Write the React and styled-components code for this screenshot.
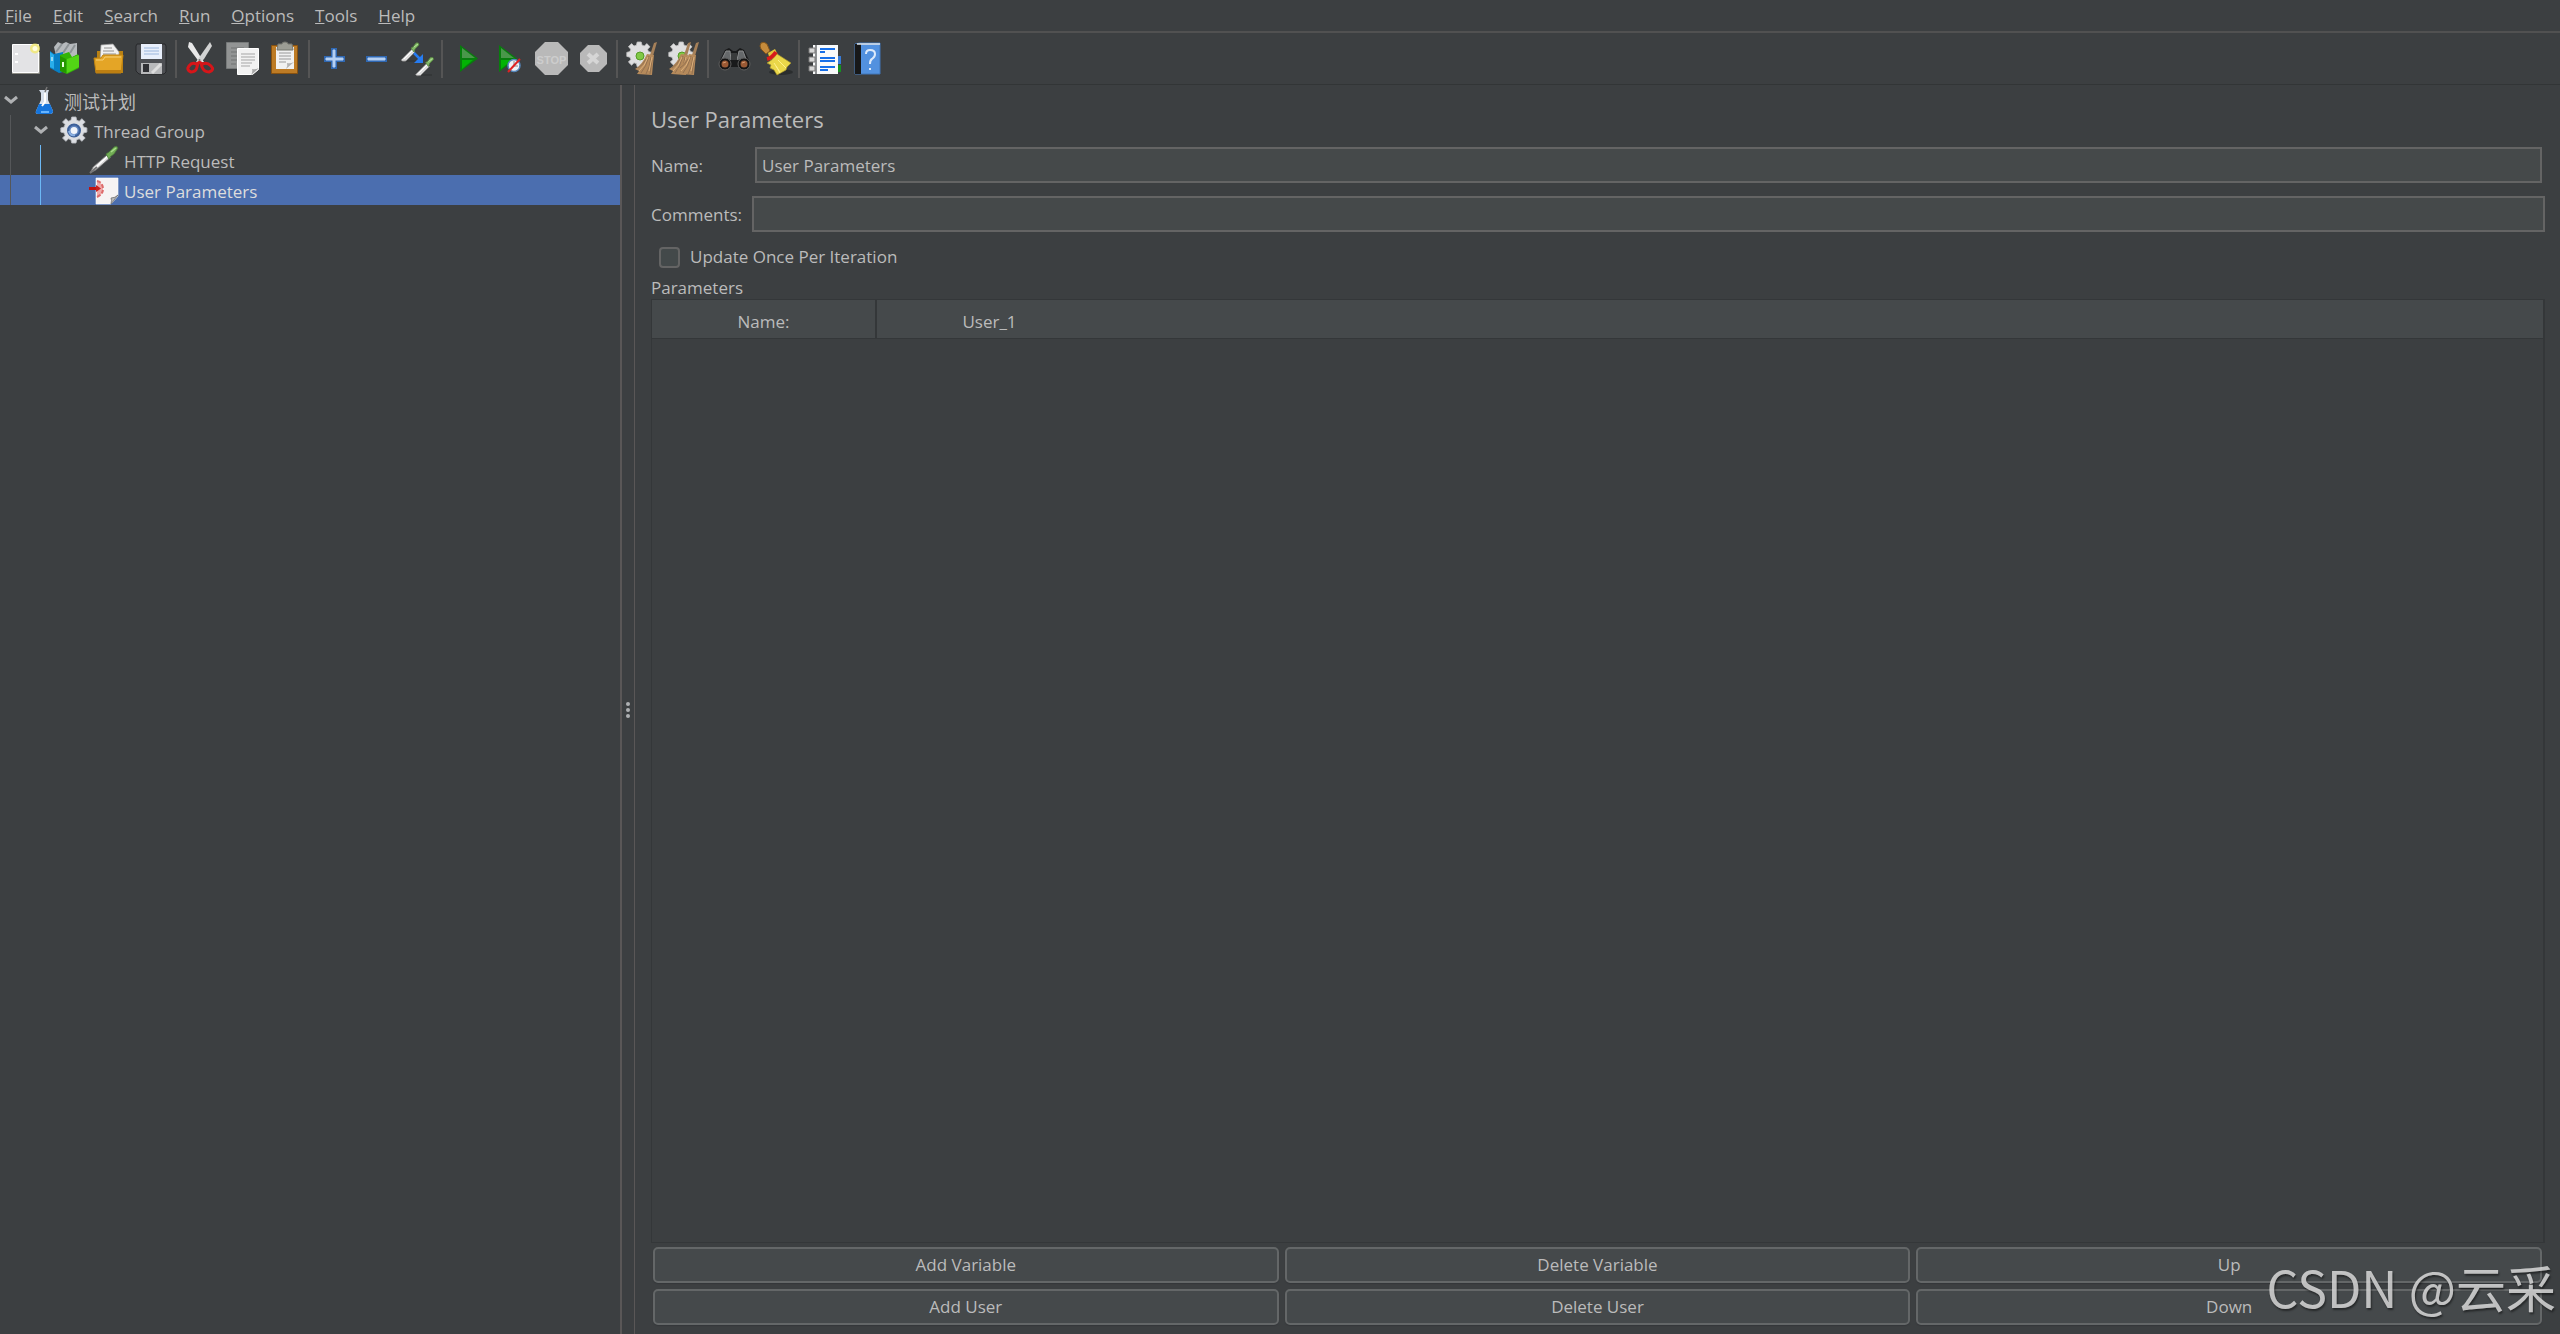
import React, { useState } from "react";
import styled, { createGlobalStyle } from "styled-components";

const GlobalStyle = createGlobalStyle`
  * { box-sizing: border-box; }
  body {
    margin: 0;
    background: #3c3f41;
    color: #bbbbbb;
    font-family: "Open Sans", "Noto Sans CJK SC", sans-serif;
    font-size: 17px;
    line-height: 24px;
  }
  button, input { font: inherit; color: inherit; }
`;

const Window = styled.div`
  display: flex;
  flex-direction: column;
  height: 100vh;
  overflow: hidden;
`;

const MenuBar = styled.nav`
  display: flex;
  gap: 21px;
  height: 33px;
  padding: 4px 5px;
  border-bottom: 2px solid #515151;
`;

const MenuItem = styled.button`
  padding: 0;
  border: 0;
  background: none;
  line-height: 24px;
  &::first-letter { text-decoration: underline; }
`;

const Toolbar = styled.div`
  display: flex;
  align-items: center;
  height: 52px;
  padding: 0 5px;
  border-bottom: 1px solid #323536;
`;

const ToolButton = styled.button`
  display: flex;
  justify-content: center;
  width: 42px;
  padding: 0;
  border: 0;
  background: none;
`;

const Separator = styled.span`
  width: 7px;
  height: 38px;
  padding: 0 3px 0 2px;
  background: #555555 content-box;
`;

const Icon = styled.svg`
  display: block;
  flex: none;
  width: ${({ $size }) => $size || 34}px;
  height: ${({ $size }) => $size || 34}px;
  overflow: visible;
`;

const Body = styled.div`
  display: flex;
  flex: 1;
  min-height: 0;
`;

const Tree = styled.ul`
  flex: 0 0 620px;
  margin: 0;
  padding: 0;
  list-style: none;
`;

const TreeRow = styled.li`
  display: flex;
  align-items: center;
  height: 30px;
  background: ${({ $selected }) => ($selected ? "#4b6eaf" : "none")};
  color: ${({ $selected }) => ($selected ? "#dddddd" : "inherit")};
`;

const Indent = styled.span`
  width: 30px;
  height: 30px;
  padding-left: 10px;
  &::before {
    content: "";
    display: block;
    width: 1px;
    height: 30px;
    background: ${({ $active }) => ($active ? "#6cb8f5" : "#555759")};
  }
`;

const Expander = styled.span`
  display: flex;
  width: 29px;
  padding-left: 4px;
`;

const TreeLabel = styled.span`
  padding: 3px 0 0 5px;
  &:lang(zh) { font-size: 18px; }
`;

const Splitter = styled.div`
  display: flex;
  flex-direction: column;
  justify-content: center;
  align-items: center;
  gap: 2px;
  flex: 0 0 15px;
  border-left: 2px solid #5a5757;
  border-right: 1px solid #5a5757;
`;

const Dot = styled.span`
  width: 4px;
  height: 4px;
  border-radius: 2px;
  background: #afb1b3;
`;

const Panel = styled.main`
  display: flex;
  flex-direction: column;
  flex: 1;
  min-width: 0;
  padding: 18px 15px 9px 16px;
`;

const Title = styled.h1`
  margin: 0 0 12px;
  font-size: 22px;
  line-height: 32px;
  font-weight: 400;
`;

const Field = styled.div`
  display: flex;
  align-items: center;
  gap: ${({ $gap }) => $gap}px;
  margin: 0 ${({ $inset }) => $inset}px 13px 0;
`;

const TextInput = styled.input`
  flex: 1;
  height: 36px;
  padding: 1px 5px 0;
  border: 2px solid #646464;
  border-radius: 0;
  background: #45494a;
  outline: none;
`;

const FieldLabel = styled.label`
  width: ${({ $width }) => $width}px;
  padding-top: 2px;
`;

const CheckRow = styled.label`
  display: flex;
  align-items: center;
  gap: 10px;
  padding-left: 8px;
  margin-bottom: 8px;
`;

const Checkbox = styled.input`
  appearance: none;
  width: 21px;
  height: 21px;
  margin: 0;
  border: 2px solid #646464;
  border-radius: 4px;
  background: #43494a;
  &:checked { background: #4b6eaf; }
`;

const Caption = styled.h2`
  margin: 0;
  font-size: 17px;
  line-height: 22px;
  font-weight: 400;
`;

const TableFrame = styled.div`
  flex: 1;
  border: solid #343739;
  border-width: 1px 2px 1px 1px;
`;

const Table = styled.table`
  width: 100%;
  border-collapse: separate;
  border-spacing: 0;
  table-layout: fixed;
  background: #45494b;
`;

const HeadCell = styled.th`
  width: ${({ $width }) => ($width ? `${$width}px` : "auto")};
  height: 39px;
  padding: 6px 0 0;
  border-bottom: 1px solid #343739;
  border-right: ${({ $divided }) => ($divided ? "2px solid #343739" : "0")};
  font-weight: 400;
`;

const Actions = styled.div`
  display: grid;
  grid-template-columns: repeat(3, 1fr);
  gap: 6px;
  padding: 4px 3px 0 2px;
`;

const ActionButton = styled.button`
  height: 36px;
  padding: 0;
  border: 2px solid #646768;
  border-radius: 5px;
  background: #45494b;
  box-shadow: 0 1px 1px #34373a;
`;

const Watermark = styled.div`
  position: fixed;
  right: 4px;
  bottom: 12px;
  color: rgba(225, 225, 225, 0.82);
  font-family: "Noto Sans CJK SC", sans-serif;
  font-size: 50px;
  line-height: 72px;
  text-shadow: 1px 2px 2px rgba(0, 0, 0, 0.45);
  pointer-events: none;
`;

const GEAR = "M14 0h5l1 4 3 1 3-3 4 4-3 3 1 3 4 1v5l-4 1-1 3 3 3-4 4-3-3-3 1-1 4h-5l-1-4-3-1-3 3-4-4 3-3-1-3-4-1v-5l4-1 1-3-3-3 4-4 3 3 3-1z";

const Dropper = () => (
  <g>
    <path d="M1 17l10-10 3 3-9 9q-4 1-5-1z" fill="#dedede" stroke="#777" strokeWidth="0.7" />
    <path d="M3 17l9-9" stroke="#fff" />
    <path d="M10 6l2-1 3-4q3-1 3 2l-4 4-1 3z" fill="#82b967" stroke="#56843f" strokeWidth="0.8" />
    <path d="M13 5l4-3" stroke="#b6e39d" />
  </g>
);

const Brush = () => (
  <g>
    <path d="M29 1l3-1-4 14-3-1z" fill="#a58059" />
    <path d="M22 12l7 1-1 9-1 11-15-1 2-3-4-2q7-4 12-15z" fill="#b58a5b" />
    <path d="M24 14q-3 11-8 17M26 15q-1 10-5 17M21 17q-3 6-8 9M27 18l-2 14" fill="none" stroke="#947150" />
    <path d="M23 15q-3 9-9 14M27 15l-3 14" fill="none" stroke="#ddb17c" />
  </g>
);

const Cog = () => (
  <g>
    <path d={GEAR} transform="translate(1) scale(.8)" fill="#dededf" stroke="#c4c4c4" />
    <circle cx="15" cy="14" r="4" fill="#80c946" stroke="#559b25" />
  </g>
);

const PlayShape = () => (
  <g>
    <path d="M10 3l18 13.5L10 30z" fill="#087d0d" />
    <path d="M12 6l13 10H12z" fill="#4a974a" />
    <path d="M12 18h11l-11 9z" fill="#02b403" />
  </g>
);

const icons = {
  new: (
    <g>
      <path d="M3.500 2.500h26v28h-26z" fill="#e3e3e5" stroke="#fff" />
      <path d="M3 31.500h27.500V10" fill="none" stroke="#8c8c85" />
      <path d="M6 12h3M6 20h3" stroke="#fff" strokeWidth="2" />
      <circle cx="26" cy="6.500" r="5" fill="#f2e96d" opacity=".8" />
      <circle cx="26" cy="6.500" r="2.500" fill="#fffde0" />
    </g>
  ),
  templates: (
    <g>
      <path d="M3 5l4-5 4 2 4-2 4 2 7-1v12l-8 4-13-3z" fill="#b6babd" />
      <path d="M5 10l6-8M12 11l6-9M19 11l5-8" stroke="#8d9396" strokeWidth="2" />
      <path d="M-1 9l4 3 9-2v20l-4 1-9-5z" fill="#087fc4" />
      <path d="M-1 10l4 3v14l-4-2z" fill="#29aeea" />
      <path d="M1 15v4" stroke="#fff" />
      <path d="M9 13l9-3 3 5 6-3 1 14-12 6-7-3z" fill="#32b507" />
      <path d="M16 17l12-4v12l-12 6z" fill="#52d515" />
      <path d="M9 14l6 3v14l-6-2z" fill="#249700" />
      <path d="M12 20v5" stroke="#e9ffe0" strokeWidth="2" />
    </g>
  ),
  open: (
    <g>
      <path d="M4 9h26v22H4z" fill="#b98113" />
      <path d="M8 3l12-1 6 8v8H7z" fill="#f1f1f1" stroke="#999" strokeWidth=".7" />
      <path d="M11 6h8M10 9h11M10 12h13" stroke="#909090" />
      <path d="M1 16h7l2-3h20l-2 18H3z" fill="#e4a526" stroke="#c18411" />
      <path d="M3 18h7l2-3h16" fill="none" stroke="#f8d278" />
      <path d="M3 28h25v3H3z" fill="#bd7f12" />
    </g>
  ),
  save: (
    <g>
      <path d="M2 2h28l1 2v26l-2 2H4l-3-3V4z" fill="#4d4f53" stroke="#27282b" />
      <path d="M6 2h21v15H6z" fill="#e8effb" />
      <path d="M9 6h15M9 9h15M9 12h15" stroke="#9bb6dc" />
      <path d="M6 21h21v11H6z" fill="#b8b9bb" />
      <path d="M8 22h6v8H8z" fill="#303135" />
      <path d="M17 31l9-9" stroke="#ddd" strokeWidth="3" />
    </g>
  ),
  cut: (
    <g>
      <path d="M5 0l3 1 8 13 4 6-4 1L4 5z" fill="#e8e8e8" />
      <path d="M26 0l2 4-8 13-5 5-3-2 7-10z" fill="#d2d3d3" />
      <path d="M14 21l-2 1q-4-2-7 2t2 6q5 0 6-5zM17 21l2 1q4-2 8 2t-2 6q-5 0-7-5z" fill="none" stroke="#d71519" strokeWidth="3" />
      <circle cx="15.500" cy="18" r="1" fill="#777" />
    </g>
  ),
  copy: (
    <g>
      <path d="M.5 .5h22v26H.5z" fill="#929494" stroke="#777a7a" />
      <path d="M5 6h13M5 10h8M5 14h6M5 18h6M5 22h5" stroke="#707373" />
      <path d="M11.500 6.500h21v21l-6 5h-15z" fill="#f2f2f2" stroke="#fff" />
      <path d="M15 12h14M15 15h14M15 18h14M15 21h11M15 24h9" stroke="#a5a5a5" />
      <path d="M25 33q2-3 1-6 3 1 7-1z" fill="#a7a7a7" />
    </g>
  ),
  paste: (
    <g>
      <path d="M3.500 3.500h26v28h-26z" fill="#bd7b25" stroke="#885210" />
      <path d="M8 5h18v22H8z" fill="#f1f1f1" />
      <path d="M10 2h4q0-2 3-2t3 2h4l1 6H9z" fill="#9c9d94" stroke="#75766f" />
      <path d="M11 11h12M11 14h12M11 17h12M11 20h7" stroke="#999" />
      <path d="M18 27q2-3 1-6 3 1 7-1z" fill="#b3b3b3" />
    </g>
  ),
  plus: (
    <g>
      <path d="M14 6h6v8h8v6h-8v7h-6v-7H7v-6h7z" fill="#2f67b1" />
      <path d="M16 8h2v8h8v2h-8v7h-2v-7H9v-2h7z" fill="#b5d0f3" stroke="#b5d0f3" />
    </g>
  ),
  minus: (
    <g>
      <path d="M7 14h21v6H7z" fill="#2f67b1" />
      <path d="M9 16h17v2H9z" fill="#b5d0f3" stroke="#b5d0f3" />
    </g>
  ),
  toggle: (
    <g>
      <path d="M2 19h13M17 33h14" stroke="#2d3031" />
      <Dropper />
      <g transform="translate(14.500 14.500)"><Dropper /></g>
      <path d="M13 11l7 7" stroke="#267cf1" strokeWidth="2.500" />
      <path d="M22 12v9h-9z" fill="#267cf1" />
    </g>
  ),
  start: <PlayShape />,
  startNoPause: (
    <g>
      <g transform="translate(-3)"><PlayShape /></g>
      <circle cx="22" cy="23.500" r="6" fill="#eef1f5" stroke="#5687bd" strokeWidth="1.500" />
      <path d="M22 19v5h4" fill="none" stroke="#8a8a8a" />
      <path d="M16 30L28 17" stroke="#df2323" strokeWidth="2" />
    </g>
  ),
  stop: (
    <g>
      <path d="M11 0h13l10 10v13L24 33H11L1 23V10z" fill="#b9b9b9" />
      <text x="17.500" y="21.500" textAnchor="middle" fontFamily="Liberation Sans" fontSize="11" fontWeight="700" fill="#cdcdcd">STOP</text>
    </g>
  ),
  shutdown: (
    <g>
      <path d="M12 3h11l8 8v11l-8 8H12l-8-8V11z" fill="#b9b9b9" />
      <path d="M12 12l10 9M22 12l-10 9" stroke="#d6d6d6" strokeWidth="4" />
    </g>
  ),
  clear: <g><Cog /><Brush /></g>,
  clearAll: (
    <g>
      <Cog />
      <g transform="translate(-8)"><Brush /></g>
      <Brush />
    </g>
  ),
  search: (
    <g>
      <path d="M3 20l6-12 4-2 4 3h3l4-3 4 2 6 12-2 5H5z" fill="#191a1b" />
      <path d="M6 17l4-8h4l1 9M30 17l-3-8h-4l-2 9" fill="#66696b" stroke="#8a8c8d" />
      <path d="M15 11h6v7h-6z" fill="#393b3c" />
      <circle cx="9" cy="22" r="6" fill="#141414" stroke="#5e5e5e" />
      <circle cx="28" cy="22" r="6" fill="#141414" stroke="#5e5e5e" />
      <circle cx="9" cy="22" r="3.500" fill="#9a5934" />
      <circle cx="28" cy="22" r="3.500" fill="#9a5934" />
      <path d="M7 21l3-1M26 21l3-1" stroke="#d59a70" />
    </g>
  ),
  resetSearch: (
    <g>
      <ellipse cx="23" cy="30" rx="12" ry="3" fill="#2a2d2e" />
      <path d="M3 1q3-2 6 1l3 7-4 3-5-5q-2-3 0-6z" fill="#c68b3b" stroke="#81551d" />
      <path d="M10 11l7-4 3 6-8 5z" fill="#e2c53a" />
      <path d="M12 19q2-1 7-7l14 9-4 4-1 3-9 5-3-5-4-2 1-3-4-2z" fill="#ead749" stroke="#a5942d" strokeWidth=".7" />
      <path d="M16 21l6 9M20 18l8 8M18 24l4 7" stroke="#fff18a" />
      <path d="M9 17q5-1 9-7" stroke="#d71b1b" strokeWidth="4" fill="none" />
    </g>
  ),
  functions: (
    <g>
      <path d="M29 14h5v8h-5z" fill="#367bd7" />
      <path d="M29 23h5v7h-5z" fill="#149321" />
      <path d="M6 3h25v29H6z" fill="#f9fafb" />
      <path d="M9 3v29" stroke="#24282c" />
      <path d="M2 6h6v5H2zM2 15h6v5H2zM2 24h6v5H2z" fill="#d7d7d7" stroke="#777" />
      <path d="M13 7h15M13 10h5M13 16h15M13 19h15M13 25h15M13 28h8" stroke="#176fe8" strokeWidth="1.800" />
    </g>
  ),
  help: (
    <g>
      <path d="M6 2l5-1h20v31H6z" fill="#5291df" stroke="#4177b9" />
      <path d="M6 2h6v30H6z" fill="#171819" />
      <path d="M8 2h23" stroke="#e1e5e8" strokeWidth="1.500" />
      <path d="M17 12q0-4 4-4 5 0 5 4 0 3-3 5-2 1-2 5M21 26v2" fill="none" stroke="#deebfb" strokeWidth="2" />
    </g>
  ),
  plan: (
    <g>
      <path d="M10 5h10l-1 3v7l5 11q0 3-3 3H9q-3 0-2-3l5-11V8z" fill="#d7e0ec" />
      <path d="M10 19h11l3 7q0 3-3 3H9q-3 0-2-3z" fill="#1675dc" />
      <path d="M12 27h8" stroke="#67b4ff" strokeWidth="2" />
      <path d="M16 8v9l-3 4" fill="none" stroke="#fff" strokeWidth="2" />
      <path d="M16 7l2-5" stroke="#777" strokeWidth="1.500" />
    </g>
  ),
  threads: (
    <g>
      <path d={GEAR} transform="translate(1 2) scale(.84)" fill="#dcdee2" stroke="#b9bcc2" />
      <circle cx="15" cy="15.500" r="6" fill="#5e83bd" stroke="#3c5f98" strokeWidth="2" />
      <circle cx="15" cy="15.500" r="3.500" fill="#f1f5fb" />
      <path d="M10 16q1 5 6 4" fill="none" stroke="#8cb1e2" strokeWidth="2" />
    </g>
  ),
  http: (
    <g>
      <path d="M1 28l3-6L19 9l3 3L7 25z" fill="#d9d9d9" stroke="#666" strokeWidth=".8" />
      <path d="M5 24L20 10" stroke="#fff" strokeWidth="1.500" />
      <path d="M1 28l7-6" stroke="#777" strokeWidth="2" />
      <path d="M17 9l3-2 5-5q3-2 4 1l-4 6-4 3-1 2z" fill="#72ad55" stroke="#48763a" strokeWidth=".8" />
      <path d="M22 7l5-4" stroke="#a9dc8c" strokeWidth="1.500" />
    </g>
  ),
  params: (
    <g>
      <path d="M7 3h22v18l-7 8H7z" fill="#f6f3f3" stroke="#fff" strokeWidth=".6" />
      <path d="M22 29q1-4 0-6 4 0 7-3z" fill="#b7b7b7" stroke="#555" strokeWidth=".6" />
      <path d="M8 6q6 2 6 8t-6 8" fill="#efaaaa" />
      <path d="M8 6q5 1 6 7M8 22q5-2 6-7" fill="none" stroke="#dd6a6a" strokeWidth="2" strokeDasharray="4 2" />
      <path d="M0 13.500h10" stroke="#bf1111" strokeWidth="3" />
      <path d="M7 10l5 3.500L7 17z" fill="#c91f1f" />
    </g>
  ),
};

const menus = ["File", "Edit", "Search", "Run", "Options", "Tools", "Help"];

const toolGroups = [
  ["new", "templates", "open", "save"],
  ["cut", "copy", "paste"],
  ["plus", "minus", "toggle"],
  ["start", "startNoPause", "stop", "shutdown"],
  ["clear", "clearAll"],
  ["search", "resetSearch"],
  ["functions", "help"],
];

const nodes = [
  { label: "测试计划", icon: "plan", depth: 0, open: true, lang: "zh" },
  { label: "Thread Group", icon: "threads", depth: 1, open: true },
  { label: "HTTP Request", icon: "http", depth: 2 },
  { label: "User Parameters", icon: "params", depth: 2 },
];

const actions = ["Add Variable", "Delete Variable", "Up", "Add User", "Delete User", "Down"];

const TestTree = () => {
  const [selected, setSelected] = useState("User Parameters");
  return (
    <Tree>
      {nodes.map(({ label, icon, depth, open, lang }) => (
        <TreeRow key={label} $selected={label === selected} onClick={() => setSelected(label)}>
          {depth > 0 && <Indent />}
          {depth > 1 && <Indent $active />}
          <Expander>
            {open && (
              <Icon $size={14} viewBox="0 0 14 14">
                <path d="M1 4l6 5 6-5" fill="none" stroke="#afb1b3" strokeWidth="3" />
              </Icon>
            )}
          </Expander>
          <Icon $size={30} viewBox="0 0 30 30">{icons[icon]}</Icon>
          <TreeLabel lang={lang}>{label}</TreeLabel>
        </TreeRow>
      ))}
    </Tree>
  );
};

const UserParameters = () => {
  const [name, setName] = useState("User Parameters");
  const [comments, setComments] = useState("");
  return (
    <Panel>
      <Title>User Parameters</Title>
      <Field $gap={8} $inset={3}>
        <FieldLabel htmlFor="name" $width={96}>Name:</FieldLabel>
        <TextInput id="name" value={name} onChange={(e) => setName(e.target.value)} />
      </Field>
      <Field $gap={5} $inset={0}>
        <FieldLabel htmlFor="comments" $width={96}>Comments:</FieldLabel>
        <TextInput id="comments" value={comments} onChange={(e) => setComments(e.target.value)} />
      </Field>
      <CheckRow>
        <Checkbox type="checkbox" />
        Update Once Per Iteration
      </CheckRow>
      <Caption>Parameters</Caption>
      <TableFrame>
        <Table>
          <thead>
            <tr>
              <HeadCell $width={225} $divided>Name:</HeadCell>
              <HeadCell $width={225}>User_1</HeadCell>
              <HeadCell as="td" />
            </tr>
          </thead>
        </Table>
      </TableFrame>
      <Actions>
        {actions.map((label) => <ActionButton key={label}>{label}</ActionButton>)}
      </Actions>
    </Panel>
  );
};

const App = () => (
  <Window>
    <GlobalStyle />
    <MenuBar>
      {menus.map((label) => <MenuItem key={label}>{label}</MenuItem>)}
    </MenuBar>
    <Toolbar>
      {toolGroups.map((group, i) => (
        <React.Fragment key={group[0]}>
          {i > 0 && <Separator />}
          {group.map((name) => (
            <ToolButton key={name} aria-label={name}>
              <Icon viewBox="0 0 34 34">{icons[name]}</Icon>
            </ToolButton>
          ))}
        </React.Fragment>
      ))}
    </Toolbar>
    <Body>
      <TestTree />
      <Splitter>
        <Dot />
        <Dot />
        <Dot />
      </Splitter>
      <UserParameters />
    </Body>
    <Watermark>CSDN @云采</Watermark>
  </Window>
);

export default App;
